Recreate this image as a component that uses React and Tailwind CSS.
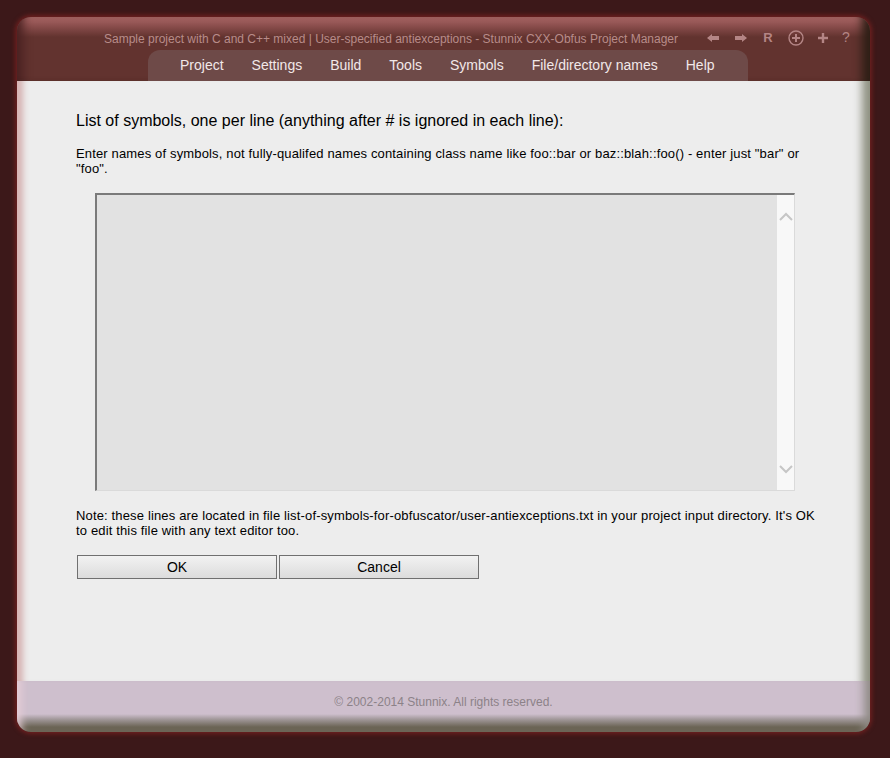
import React from 'react';

const menu = ['Project', 'Settings', 'Build', 'Tools', 'Symbols', 'File/directory names', 'Help'];

function Chevron({ up }) {
  return (
    <svg width="14" height="9" viewBox="0 0 14 9" fill="none" stroke="#c6c6c6" strokeWidth="2">
      {up ? <path d="M1 8 L7 2 L13 8" /> : <path d="M1 1 L7 7 L13 1" />}
    </svg>
  );
}

function ToolIcons() {
  return (
    <div className="flex items-center gap-[13px] text-[#b48585] text-[13px] font-bold pr-[18px]">
      <svg width="12" height="10" viewBox="0 0 12 10" fill="#b48585" className="ml-[3px]"><path d="M0 5 L5 1 L5 3 L12 3 L12 7 L5 7 L5 9 Z" /></svg>
      <svg width="12" height="10" viewBox="0 0 12 10" fill="#b48585" className="ml-[3px]"><path d="M12 5 L7 1 L7 3 L0 3 L0 7 L7 7 L7 9 Z" /></svg>
      <span className="w-[14px] text-center ml-[1px]">R</span>
      <svg width="16" height="16" viewBox="0 0 16 16" fill="none" stroke="#b48585" strokeWidth="1.4"><circle cx="8" cy="8" r="7" /><path d="M8 4 V12 M4 8 H12" strokeWidth="2" /></svg>
      <svg width="12" height="12" viewBox="0 0 12 12" fill="none" stroke="#b48585" strokeWidth="2.4"><path d="M6 1 V11 M1 6 H11" /></svg>
      <span className="w-[12px] text-center font-normal text-[14px] -ml-[2px]">?</span>
    </div>
  );
}

export default function App() {
  return (
    <div className="w-[890px] h-[758px] bg-[#3c1819] pt-[17px] pl-[17px] pr-[20px] pb-[26px] font-['Liberation_Sans',Arial,sans-serif]">
      <div className="h-full flex flex-col rounded-[14px] overflow-hidden shadow-[0_0_4px_2px_#6e1f1f]">
        {/* Header */}
        <div className="h-[64px] flex flex-col bg-[linear-gradient(180deg,#a96766_0px,#8e504f_8px,#62332f_20px,#62332f_100%)] shadow-[inset_-14px_0_10px_-6px_#2e1f16,inset_14px_0_10px_-8px_#4a2222]">
          <div className="h-[33px] flex items-end justify-end pb-[2px]">
            <span className="text-[12px] text-[#b88c8a] mr-[26px]">Sample project with C and C++ mixed | User-specified antiexceptions - Stunnix CXX-Obfus Project Manager</span>
            <ToolIcons />
          </div>
          <div className="flex-1 flex">
            <div className="ml-[131px] w-[600px] rounded-t-[12px] bg-[#6e4a48] flex items-center pl-[32px] gap-[28px] text-[14px] text-[#f2e8e8]">
              {menu.map(m => <span key={m}>{m}</span>)}
            </div>
          </div>
        </div>

        {/* Content */}
        <div className="flex-1 bg-[#ededed] pl-[59px] pr-[52px] pt-[30px] text-black shadow-[inset_-16px_0_8px_-8px_#8f9282,inset_16px_0_6px_-10px_#d6b2b2]">
          <h1 className="text-[16px] leading-[20px]">List of symbols, one per line (anything after # is ignored in each line):</h1>
          <p className="mt-[15px] text-[13px] tracking-[0.15px] leading-[15px]">Enter names of symbols, not fully-qualifed names containing class name like foo::bar or baz::blah::foo() - enter just "bar" or "foo".</p>
          <div className="mt-[17px] ml-[19px] w-[700px] h-[298px] flex border-t-2 border-l-2 border-[#7a7a7a] border-r border-b border-r-[#dadada] border-b-[#dadada]">
            <div className="flex-1 bg-[#e2e2e2]" />
            <div className="w-[17px] bg-[#f8f8f8] flex flex-col items-center justify-between pt-[17px] pb-[16px]">
              <Chevron up />
              <Chevron />
            </div>
          </div>
          <p className="mt-[17px] text-[13px] tracking-[0.15px] leading-[15px]">Note: these lines are located in file list-of-symbols-for-obfuscator/user-antiexceptions.txt in your project input directory. It's OK to edit this file with any text editor too.</p>
          <div className="mt-[17px] ml-px flex gap-[2px]">
            <button className="w-[200px] h-[24px] border border-[#707070] bg-[linear-gradient(180deg,#f2f2f2,#dcdcdc)] text-[14px] text-black">OK</button>
            <button className="w-[200px] h-[24px] border border-[#707070] bg-[linear-gradient(180deg,#f2f2f2,#dcdcdc)] text-[14px] text-black">Cancel</button>
          </div>
        </div>

        {/* Footer */}
        <div className="h-[51px] bg-[linear-gradient(180deg,#cebfcd_0px,#cebfcd_33px,#a39a9c_38px,#6b6455_46px,#6b6455_100%)] shadow-[inset_-14px_0_10px_-8px_#8f8a85,inset_14px_0_8px_-10px_#e6cdd6]">
          <div className="h-[34px] flex items-center justify-center text-[12px] text-[#8c8288] pt-[7px]">© 2002-2014 Stunnix. All rights reserved.</div>
        </div>
      </div>
    </div>
  );
}
